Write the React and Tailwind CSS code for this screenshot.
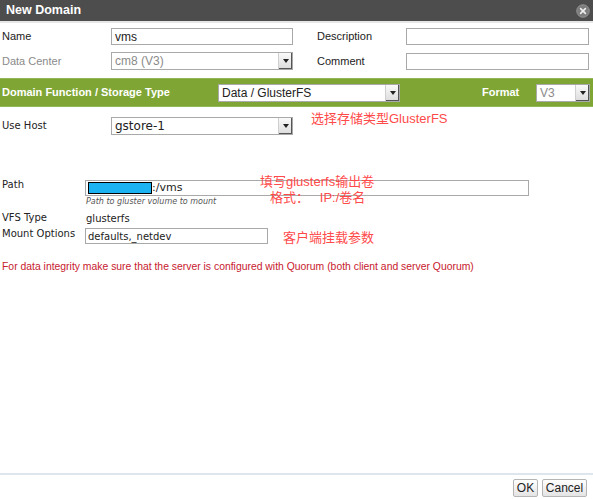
import React from "react";

const SelectBox = ({ value, className = "", disabled = false }) => (
  <div
    className={`flex items-center justify-between border border-[#a9a9a9] bg-white h-[18px] ${className}`}
  >
    <span
      className={`pl-[3px] text-[12px] leading-none ${
        disabled ? "text-[#8a8a8a]" : "text-[#222]"
      }`}
    >
      {value}
    </span>
    <div className="flex h-full w-[14px] items-center justify-center border-l border-[#cfcfcf] bg-gradient-to-b from-[#fafafa] to-[#dcdcdc] shadow-[inset_-1px_-1px_0_#555]">
      <svg width="6" height="4" viewBox="0 0 6 4">
        <path d="M0 0h6L3 4z" fill="#222" />
      </svg>
    </div>
  </div>
);

const TextInput = ({ value = "", className = "" }) => (
  <div
    className={`flex items-center border border-[#a9a9a9] bg-white h-[17px] pl-[3px] text-[12px] leading-none text-[#222] ${className}`}
  >
    {value}
  </div>
);

export default function App() {
  return (
    <div className="relative h-[499px] w-[593px] overflow-hidden bg-white font-['Liberation_Sans',Arial,sans-serif] text-[#222]">
      {/* title bar */}
      <div className="flex h-[21px] items-center justify-between bg-[#4d4d4d] pl-[6px] pr-[3px]">
        <span className="text-[12.5px] font-bold text-white">New Domain</span>
        <svg width="14" height="14" viewBox="0 0 14 14">
          <circle cx="7" cy="7" r="6.3" fill="#7d7d7d" stroke="#9a9a9a" strokeWidth="0.8" />
          <path d="M4.6 4.6l4.8 4.8M9.4 4.6l-4.8 4.8" stroke="#eee" strokeWidth="1.6" strokeLinecap="round" />
        </svg>
      </div>
      <div className="h-[2px] bg-[#e6e6e6]" />

      {/* top fields */}
      <div className="mt-[5px] flex h-[17px] items-center text-[11px]">
        <span className="w-[111px] pl-[2px]">Name</span>
        <TextInput value="vms" className="w-[182px]" />
        <span className="ml-[24px] w-[89px]">Description</span>
        <TextInput className="w-[183px]" />
      </div>
      <div className="mt-[7px] flex h-[18px] items-center text-[11px]">
        <span className="w-[111px] pl-[2px] text-[#8a8a8a]">Data Center</span>
        <SelectBox value="cm8 (V3)" disabled className="w-[182px]" />
        <span className="ml-[24px] w-[89px]">Comment</span>
        <TextInput className="w-[183px]" />
      </div>

      {/* green bar */}
      <div className="mt-[8px] flex h-[29px] items-center border-y border-[#93b656] bg-[#7fa635] text-[11px] font-bold text-white">
        <span className="w-[218px] pl-[2px]">Domain Function / Storage Type</span>
        <SelectBox value="Data / GlusterFS" className="w-[182px] font-normal" />
        <span className="ml-[82px] w-[54px]">Format</span>
        <SelectBox value="V3" disabled className="w-[54px] font-normal" />
      </div>

      {/* use host */}
      <div className="mt-[10px] flex h-[18px] items-start text-[10px] font-['DejaVu_Sans',Verdana,sans-serif]">
        <span className="w-[111px] pl-[2px] pt-[1px]">Use Host</span>
        <SelectBox value="gstore-1" className="w-[182px] font-['DejaVu_Sans',Verdana,sans-serif]" />
      </div>

      {/* gluster fields */}
      <div className="mt-[45px] font-['DejaVu_Sans',Verdana,sans-serif] text-[10px]">
        <div className="flex">
          <span className="w-[85px] pl-[2px] leading-[10px]">Path</span>
          <div className="flex flex-col">
            <div className="flex h-[16px] w-[444px] items-center border border-[#a9a9a9] bg-white pl-[2px] text-[11px]">
              <span className="h-[12px] w-[64px] border border-black bg-[#1cb3f2]" />
              <span>:/vms</span>
            </div>
            <span className="mt-[1px] pl-[1px] text-[8px] italic leading-[10px] text-[#555]">
              Path to gluster volume to mount
            </span>
          </div>
        </div>
        <div className="mt-[1px] flex h-[16px] items-end">
          <span className="w-[86px] pl-[2px] leading-[12px]">VFS Type</span>
          <span className="leading-[10px]">glusterfs</span>
        </div>
        <div className="mt-[4px] flex">
          <span className="w-[85px] pl-[2px] leading-[12px]">Mount Options</span>
          <div className="flex h-[16px] w-[183px] items-center border border-[#a9a9a9] bg-white pl-[2px] text-[10px]">
            defaults,_netdev
          </div>
        </div>
      </div>

      <p className="mt-[15px] pl-[2px] text-[10.4px] text-[#c8202e]">
        For data integrity make sure that the server is configured with Quorum (both client and server Quorum)
      </p>

      {/* footer */}
      <div className="absolute inset-x-0 top-[473px] border-t-2 border-[#dfe5ec]">
        <div className="mt-[4px] flex justify-end gap-[4px] pr-[6px]">
          <button className="h-[18px] w-[25px] rounded-[2px] border border-[#b5b5b5] bg-gradient-to-b from-white to-[#e4e4e4] text-[12px] leading-none text-[#222]">
            OK
          </button>
          <button className="h-[18px] w-[45px] rounded-[2px] border border-[#b5b5b5] bg-gradient-to-b from-white to-[#e4e4e4] text-[12px] leading-none text-[#222]">
            Cancel
          </button>
        </div>
      </div>

      {/* red annotations */}
      <div className="pointer-events-none absolute left-0 top-0 font-['Liberation_Sans','Noto_Sans_CJK_SC',sans-serif] text-[13px] leading-[16px] text-[#ff4a4a]">
        <span className="absolute left-[311px] top-[111px] whitespace-nowrap">选择存储类型GlusterFS</span>
        <span className="absolute left-[260px] top-[174px] whitespace-nowrap">填写glusterfs输出卷</span>
        <span className="absolute left-[270px] top-[190px] whitespace-pre">格式：   IP:/卷名</span>
        <span className="absolute left-[283px] top-[230px] whitespace-nowrap">客户端挂载参数</span>
      </div>
    </div>
  );
}
